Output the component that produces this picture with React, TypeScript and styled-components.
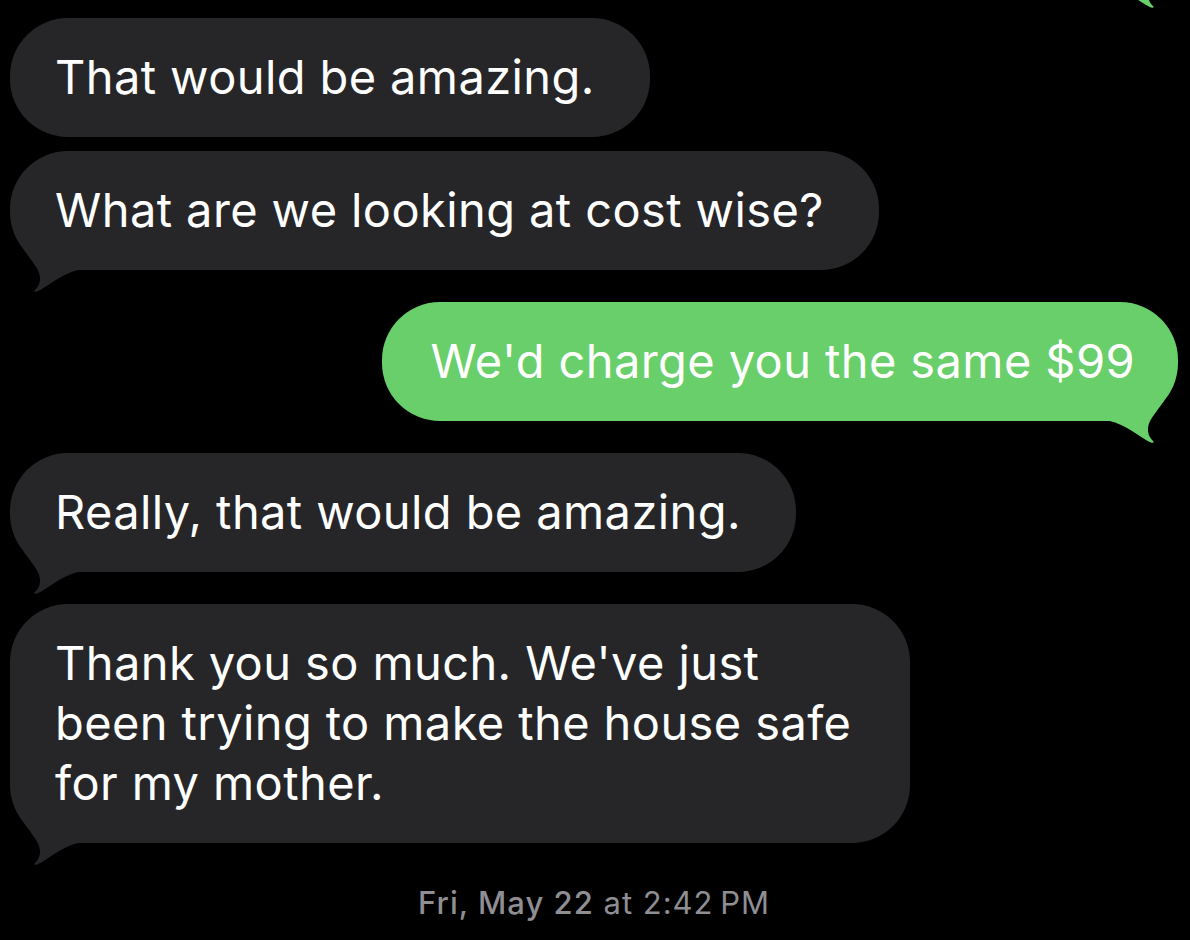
import React from 'react';
import styled, { createGlobalStyle, css } from 'styled-components';

const GlobalStyle = createGlobalStyle`
  html, body {
    margin: 0;
    padding: 0;
    background: #000;
    overflow: hidden;
  }
  body {
    font-family: Inter, "Noto Sans", "Liberation Sans", sans-serif;
    -webkit-font-smoothing: antialiased;
  }
`;

const Screen = styled.main`
  width: 1190px;
  height: 940px;
  background: #000;
  overflow: hidden;
`;

const Thread = styled.div`
  display: flex;
  flex-direction: column;
  padding: 0 12px 0 10px;
  margin-top: -133px;
`;

const Row = styled.div<{ $mine?: boolean; $grouped?: boolean }>`
  display: flex;
  justify-content: ${(p) => (p.$mine ? 'flex-end' : 'flex-start')};
  margin-top: ${(p) => (p.$grouped ? '14px' : '32px')};
  &:first-child {
    margin-top: 0;
  }
`;

const Bubble = styled.div<{ $mine?: boolean }>`
  position: relative;
  max-width: 900px;
  box-sizing: border-box;
  border-radius: 58px;
  font-size: 47px;
  line-height: 60px;
  letter-spacing: 0.4px;
  color: #fff;
  ${(p) =>
    p.$mine
      ? css`
          background: #69cf6a;
          padding: 29px 43px 30px 48px;
        `
      : css`
          background: #262629;
          padding: 29px 55px 30px 45px;
        `}
`;

const Text = styled.span`
  position: relative;
  z-index: 1;
`;

const Tail = styled.svg<{ $mine?: boolean }>`
  position: absolute;
  bottom: -22px;
  width: 80px;
  height: 50px;
  ${(p) =>
    p.$mine
      ? css`
          right: 0;
          transform: scaleX(-1);
        `
      : css`
          left: 0;
        `}
`;

const Stamp = styled.div`
  margin-top: 42px;
  text-align: center;
  font-size: 31px;
  line-height: 36px;
  color: #8e8e93;
  letter-spacing: 1px;
`;

const StampDay = styled.span`
  font-weight: 500;
`;

type Msg = { text: React.ReactNode; mine?: boolean; tail?: boolean };

const messages: Msg[] = [
  { text: '\u00a0', mine: true, tail: true },
  { text: 'That would be amazing.' },
  { text: 'What are we looking at cost wise?', tail: true },
  { text: "We'd charge you the same $99", mine: true, tail: true },
  { text: 'Really, that would be amazing.', tail: true },
  {
    text: "Thank you so much. We've just been trying to make the house safe for my mother.",
    tail: true,
  },
];

function BubbleTail({ mine }: { mine?: boolean }) {
  return (
    <Tail $mine={mine} viewBox="0 -28 80 50" aria-hidden>
      <path
        d="M14 -20 C22 -8 31 0 30 10 C29.5 15 27 18 24.5 20.5 C24 21.6 25 22 27 21.5 C38 17 50 4 70 -0.5 L70 -20 Z"
        fill={mine ? '#69cf6a' : '#262629'}
      />
    </Tail>
  );
}

export default function App() {
  return (
    <Screen>
      <GlobalStyle />
      <Thread>
        {messages.map((m, i) => {
          const prev = messages[i - 1];
          const grouped = !!prev && !prev.tail && !!prev.mine === !!m.mine;
          return (
            <Row key={i} $mine={m.mine} $grouped={grouped}>
              <Bubble $mine={m.mine}>
                {m.tail && <BubbleTail mine={m.mine} />}
                <Text>{m.text}</Text>
              </Bubble>
            </Row>
          );
        })}
        <Stamp>
          <StampDay>Fri, May 22</StampDay> at 2:42&#8201;PM
        </Stamp>
      </Thread>
    </Screen>
  );
}
